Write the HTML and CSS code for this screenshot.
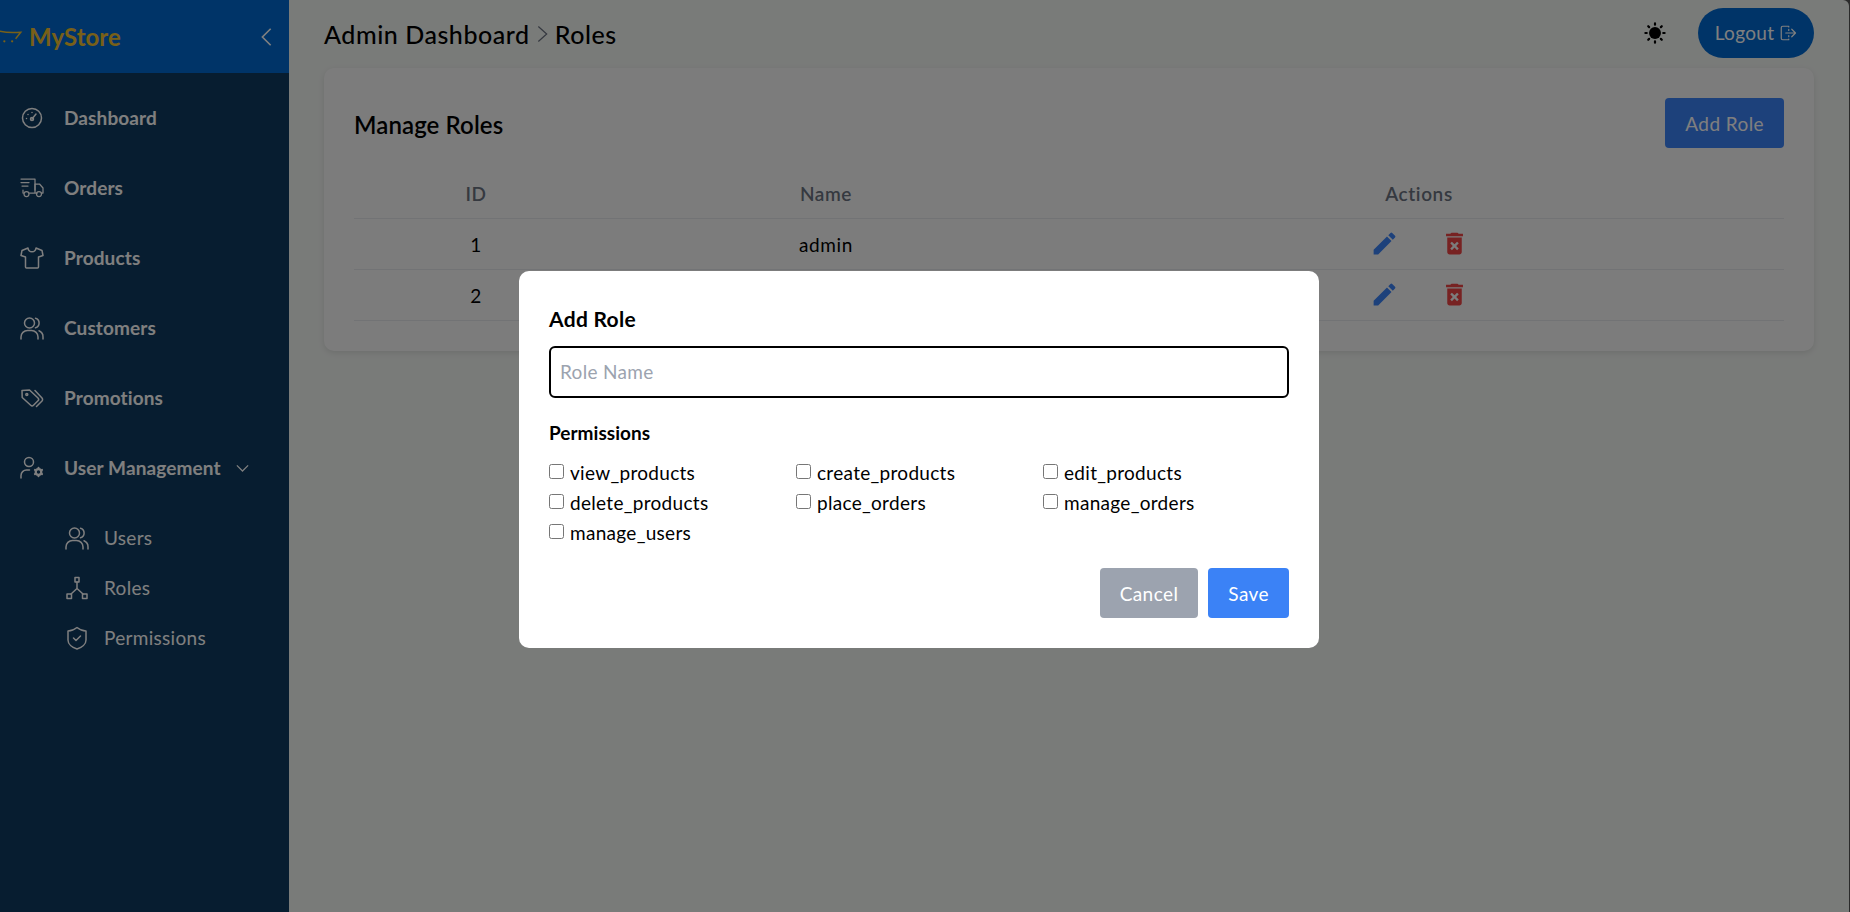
FILE: index.html
```html
<!DOCTYPE html>
<html lang="en">
<head>
<meta charset="utf-8">
<title>Roles</title>
<link rel="stylesheet" href="styles.css">
</head>
<body>
<div class="app">
  <aside class="sidebar">
    <div class="brand">
      <div class="logo">
        <svg class="cart" viewBox="0 0 30 24" fill="none" stroke="currentColor" stroke-width="1.6"><path d="M-6 3.5C3 7 12 7.500 24 6.500L18 14"/><circle cx="5" cy="17" r="1.300" fill="currentColor" stroke="none"/><circle cx="14" cy="17" r="1.300" fill="currentColor" stroke="none"/></svg>
        <span>MyStore</span>
      </div>
      <svg class="collapse" viewBox="0 0 24 24" fill="none" stroke="currentColor" stroke-width="1.800"><path d="M16 3 7 12l9 9"/></svg>
    </div>
    <nav class="nav">
      <a class="nav-item">
        <svg class="nav-icon" viewBox="0 0 24 24"><circle cx="12" cy="12" r="9.500"/><path d="m12 13 4-5M6.500 12.500h.01M8 8.500h.01M12 6.500h.01"/><circle cx="12" cy="13" r="1.500"/></svg>
        <span>Dashboard</span>
      </a>
      <a class="nav-item">
        <svg class="nav-icon thin" viewBox="0 0 24 24"><path d="M1 3h14v14H9.500M3.500 17H3v-3M15 8h4.500l3.500 4v5h-1.500M15 17h2M1 6.500h8M2 10h6"/><path d="M15 8v6"/><circle cx="6.500" cy="18" r="2.500"/><circle cx="19" cy="18" r="2.500"/></svg>
        <span>Orders</span>
      </a>
      <a class="nav-item">
        <svg class="nav-icon" viewBox="0 0 24 24"><path d="M8 2 2 4.500 1 9.500l4.500 1.500V21a1 1 0 0 0 1 1h11a1 1 0 0 0 1-1V11L23 9.500l-1-5L16 2c-.5 5-7.500 5-8 0z"/></svg>
        <span>Products</span>
      </a>
      <a class="nav-item">
        <svg class="nav-icon" viewBox="0 0 24 24"><circle cx="9.500" cy="7" r="5"/><path d="M1 23v-2a6.500 6.500 0 0 1 6.500-6.500h4A6.500 6.500 0 0 1 18 21v2M15.500 2.200a5 5 0 0 1 0 9.600M19 14.800a6.500 6.500 0 0 1 4 6.200v2"/></svg>
        <span>Customers</span>
      </a>
      <a class="nav-item">
        <svg class="nav-icon" viewBox="0 0 24 24"><path d="M2 4.500 9.500 4 18 12a2 2 0 0 1 0 2.800l-4.500 4.500a2 2 0 0 1-2.800 0L2.200 11.500z"/><path d="M15 4.500 22 12a2.500 2.500 0 0 1 0 3l-5.500 5.500"/><circle cx="6.800" cy="8.500" r="1"/></svg>
        <span>Promotions</span>
      </a>
      <a class="nav-item">
        <svg class="nav-icon" viewBox="0 0 24 24"><circle cx="9" cy="6" r="4.500"/><path d="M1 22v-2.500A5.500 5.500 0 0 1 6.500 14h3"/><circle cx="18.500" cy="16" r="2.800" stroke-width="2.200"/><path d="M18.500 11.800v1.200M18.500 19v1.200M14.900 13.900l1 .6M21.100 17.500l1 .6M14.900 18.100l1-.6M21.100 14.500l1-.6" stroke-width="2"/></svg>
        <span>User Management</span>
        <svg class="caret" viewBox="0 0 24 24"><path d="m3 7 9 9 9-9"/></svg>
      </a>
      <div class="subnav">
        <a class="sub-item">
          <svg class="nav-icon" viewBox="0 0 24 24"><circle cx="9.500" cy="7" r="5"/><path d="M1 23v-2a6.500 6.500 0 0 1 6.500-6.500h4A6.500 6.500 0 0 1 18 21v2M15.500 2.200a5 5 0 0 1 0 9.600M19 14.800a6.500 6.500 0 0 1 4 6.200v2"/></svg>
          <span>Users</span>
        </a>
        <a class="sub-item">
          <svg class="nav-icon" viewBox="0 0 24 24"><rect x="10" y="1.500" width="4" height="4.500"/><rect x="2" y="18" width="4.500" height="4.500"/><rect x="17.500" y="18" width="4.500" height="4.500"/><path d="M12 6v6.500M12 12.500l-6 5.500M12 12.500l6 5.500"/></svg>
          <span>Roles</span>
        </a>
        <a class="sub-item">
          <svg class="nav-icon" viewBox="0 0 24 24"><path d="M12 1.500c3 2.500 6 3.500 9 3.500v9c0 4-4 7.500-9 9-5-1.500-9-5-9-9V5c3 0 6-1 9-3.500z"/><path d="m8.500 12 2.500 2.500 4.500-4.500"/></svg>
          <span>Permissions</span>
        </a>
      </div>
    </nav>
  </aside>

  <main class="main">
    <header class="topbar">
      <div class="crumbs">
        <span>Admin Dashboard</span>
        <svg class="crumb-sep" viewBox="0 0 14 24"><path d="m2 3 10 9-10 9"/></svg>
        <span>Roles</span>
      </div>
      <div class="top-actions">
        <svg class="sun" viewBox="0 0 24 24"><circle cx="12" cy="12" r="6.500"/><path d="M12 1.500v1.500M12 21v1.500M1.500 12H3M21 12h1.500M4.600 4.600l1 1M18.400 18.400l1 1M4.600 19.400l1-1M18.400 5.600l1-1"/></svg>
        <button class="logout">
          <span>Logout</span>
          <svg class="logout-icon" viewBox="0 0 24 24"><path d="M13 4V3H5a2 2 0 0 0-2 2v14a2 2 0 0 0 2 2h8v-1M13 8.500V7M13 15.500V17M9 12h12M17 7l5 5-5 5"/></svg>
        </button>
      </div>
    </header>

    <section class="card">
      <div class="card-head">
        <h2>Manage Roles</h2>
        <button class="btn btn-blue">Add Role</button>
      </div>
      <table class="roles">
        <thead>
          <tr><th class="col-id">ID</th><th class="col-name">Name</th><th class="col-actions">Actions</th></tr>
        </thead>
        <tbody>
          <tr>
            <td class="cell-text">1</td><td class="cell-text">admin</td>
            <td>
              <div class="acts">
                <svg class="act act-edit" viewBox="0 0 24 24"><path d="M3 17.250V21h3.750L17.810 9.940l-3.750-3.750L3 17.250zM20.710 7.040a1 1 0 0 0 0-1.410l-2.340-2.340a1 1 0 0 0-1.410 0l-1.830 1.830 3.750 3.750 1.830-1.830z"/></svg>
                <svg class="act act-del" viewBox="0 0 24 24"><path d="M6 19c0 1.100.9 2 2 2h8c1.100 0 2-.9 2-2V7H6v12zm2.460-7.120 1.410-1.410L12 12.590l2.120-2.120 1.410 1.410L13.410 14l2.120 2.120-1.410 1.410L12 15.410l-2.120 2.120-1.410-1.410L10.590 14l-2.130-2.120zM15.500 4l-1-1h-5l-1 1H5v2h14V4z"/></svg>
              </div>
            </td>
          </tr>
          <tr>
            <td class="cell-text">2</td><td class="cell-text">staff</td>
            <td>
              <div class="acts">
                <svg class="act act-edit" viewBox="0 0 24 24"><path d="M3 17.250V21h3.750L17.810 9.940l-3.750-3.750L3 17.250zM20.710 7.040a1 1 0 0 0 0-1.410l-2.340-2.340a1 1 0 0 0-1.410 0l-1.830 1.830 3.750 3.750 1.830-1.830z"/></svg>
                <svg class="act act-del" viewBox="0 0 24 24"><path d="M6 19c0 1.100.9 2 2 2h8c1.100 0 2-.9 2-2V7H6v12zm2.460-7.120 1.410-1.410L12 12.590l2.120-2.120 1.410 1.410L13.410 14l2.120 2.120-1.410 1.410L12 15.410l-2.120 2.120-1.410-1.410L10.590 14l-2.130-2.120zM15.500 4l-1-1h-5l-1 1H5v2h14V4z"/></svg>
              </div>
            </td>
          </tr>
        </tbody>
      </table>
    </section>
  </main>
</div>

<div class="overlay">
  <div class="modal">
    <h3>Add Role</h3>
    <input class="field" type="text" placeholder="Role Name">
    <h4>Permissions</h4>
    <div class="perms">
      <label class="perm"><input type="checkbox"><span>view_products</span></label>
      <label class="perm"><input type="checkbox"><span>create_products</span></label>
      <label class="perm"><input type="checkbox"><span>edit_products</span></label>
      <label class="perm"><input type="checkbox"><span>delete_products</span></label>
      <label class="perm"><input type="checkbox"><span>place_orders</span></label>
      <label class="perm"><input type="checkbox"><span>manage_orders</span></label>
      <label class="perm"><input type="checkbox"><span>manage_users</span></label>
    </div>
    <div class="modal-actions">
      <button class="btn btn-gray">Cancel</button>
      <button class="btn btn-blue">Save</button>
    </div>
  </div>
</div>
</body>
</html>
```
FILE: styles.css
```css
* { box-sizing: border-box; }
html, body { margin: 0; height: 100%; }
body { font-family: "Lato", "Noto Sans", sans-serif; font-size: 19px; letter-spacing: .3px; color: #000; overflow: hidden; }
button { font: inherit; letter-spacing: inherit; border: 0; cursor: pointer; }
svg { display: block; flex: none; }

.app { display: flex; height: 912px; background: #555; border-right: 1px solid #555; }

.sidebar { width: 289px; flex: none; background: #0e3a60; color: #fff; }
.brand { height: 73px; background: #0069d0; display: flex; align-items: center; justify-content: space-between; padding-right: 11px; overflow: hidden; }
.logo { display: flex; align-items: center; gap: 3px; color: #f0c030; font-size: 24px; font-weight: 700; letter-spacing: 0; }
.cart { width: 26px; height: 22px; overflow: visible; }
.collapse { width: 22px; height: 22px; color: #fff; }

.nav { padding-top: 10px; }
.nav-item { height: 70px; display: flex; align-items: center; padding-left: 20px; gap: 20px; font-weight: 700; letter-spacing: .12px; }
.nav-item span, .sub-item span, .logout span, .perm span { padding-bottom: 2px; }
.nav-icon { width: 24px; height: 24px; fill: none; stroke: currentColor; stroke-width: 1.500; stroke-linecap: round; stroke-linejoin: round; }
.nav-icon.thin { stroke-width: 1.250; }
.caret { width: 15px; height: 15px; margin-left: -6px; fill: none; stroke: currentColor; stroke-width: 2; }
.subnav { padding-top: 10px; }
.sub-item { height: 50px; display: flex; align-items: center; padding-left: 65px; gap: 15px; }

.main { flex: 1; min-width: 0; background: #f3f6f3; border-top-right-radius: 6px; padding: 0 35px; }
.topbar { height: 66px; margin-bottom: 2px; display: flex; align-items: center; justify-content: space-between; }
.crumbs { display: flex; align-items: center; gap: 6px; padding-top: 2px; font-size: 25px; font-weight: 500; letter-spacing: .55px; }
.crumb-sep { width: 13px; height: 20px; fill: none; stroke: #6b7280; stroke-width: 1.500; }
.top-actions { display: flex; align-items: center; gap: 32px; }
.sun { width: 22px; height: 22px; fill: #000; stroke: #000; stroke-width: 2.400; stroke-linecap: round; }
.sun circle { stroke: none; }
.logout { height: 50px; width: 116px; border-radius: 25px; background: #0069d0; color: #fff; display: flex; align-items: center; justify-content: center; gap: 5px; }
.logout-icon { width: 18px; height: 18px; fill: none; stroke: currentColor; stroke-width: 1.600; stroke-linejoin: round; stroke-linecap: round; }

.card { background: #f9f9f9; border-radius: 10px; padding: 30px; box-shadow: 0 2px 6px rgba(0,0,0,.1); }
.card-head { display: flex; align-items: center; justify-content: space-between; height: 50px; margin-bottom: 20px; }
.card-head h2 { margin: 0; padding-top: 2px; font-size: 24px; font-weight: 600; letter-spacing: .1px; }

.btn { height: 50px; padding: 0 20px; border-radius: 4px; color: #fff; letter-spacing: .42px; }
.btn-blue { background: #3b82f6; }
.btn-gray { background: #9ca3af; }

.roles { width: 100%; border-collapse: collapse; table-layout: fixed; letter-spacing: .6px; }
.roles th, .roles td { border-bottom: 1px solid #e5e7eb; text-align: center; padding: 0; height: 51px; }
.roles th { font-weight: 600; color: #6b7280; height: 50px; padding-top: 1px; }
.roles .cell-text { padding-top: 2px; }
.col-id { width: 244px; }
.col-name { width: 456px; }
.acts { display: flex; justify-content: center; gap: 41px; }
.act { width: 29px; height: 29px; }
.act-edit { fill: #3b82f6; }
.act-del { fill: #ef4444; }

.overlay { position: fixed; inset: 0; z-index: 50; background: rgba(0,0,0,.5); display: flex; align-items: center; justify-content: center; padding: 7px 12px 0 0; }
.modal { width: 800px; height: 377px; background: #fff; border-radius: 10px; padding: 30px; }
.modal h3 { margin: 4px 0 14px; font-size: 21px; line-height: 27px; font-weight: 700; }
.field { display: block; width: 100%; height: 52px; border: 2px solid #000; border-radius: 6px; padding: 0 9px 2px; font: inherit; letter-spacing: inherit; outline: none; }
.field::placeholder { color: #9ca3af; }
.modal h4 { margin: 22px 0 12px; font-size: 19px; line-height: 26px; font-weight: 700; letter-spacing: .02px; }
.perms { display: grid; grid-template-columns: repeat(3, 247px); grid-auto-rows: 30px; }
.perm { display: flex; align-items: center; gap: 6px; }
.perm input { width: 15px; height: 15px; margin: 0 0 4px; }
.modal-actions { display: flex; justify-content: flex-end; gap: 10px; margin-top: 20px; }
```
